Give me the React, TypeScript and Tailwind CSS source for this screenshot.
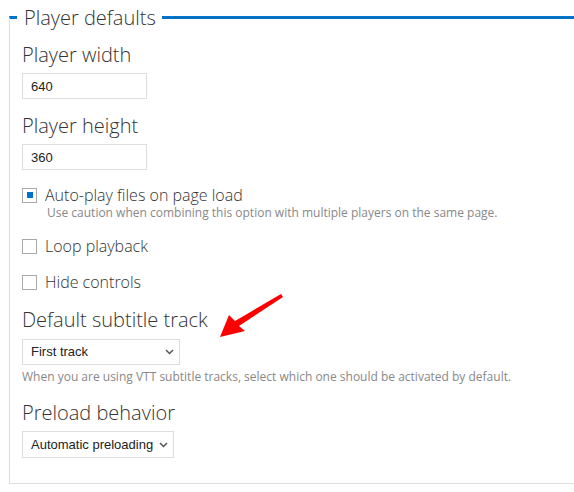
import { useState } from "react";

const heading = "font-['Open_Sans',sans-serif] font-light text-[20px] leading-[28px] text-[#333]";
const helper = "font-['Open_Sans',sans-serif] text-[12px] leading-[16px] text-[#888]";

function Chevron() {
  return (
    <svg width="9" height="6" viewBox="0 0 9 6" className="pointer-events-none absolute right-[6px] top-[11px]">
      <polyline points="1,1 4.5,4.5 8,1" fill="none" stroke="#555" strokeWidth="1.5" />
    </svg>
  );
}

function Check({ label, checked }: { label: string; checked?: boolean }) {
  return (
    <div className="flex items-center gap-[8px]">
      <span className="flex h-[15px] w-[15px] items-center justify-center border border-[#aaa] bg-white">
        {checked && <span className="h-[6px] w-[6px] bg-[#0073c6]" />}
      </span>
      <span className="font-['Open_Sans',sans-serif] text-[16px] font-light leading-[24px] text-[#333]">{label}</span>
    </div>
  );
}

export default function App() {
  const [width, setWidth] = useState("640");
  const [height, setHeight] = useState("360");

  return (
    <div className="relative h-[492px] w-[574px] overflow-hidden bg-white">
      <fieldset className="ml-[9px] border-b border-l border-r-0 border-[#ddd] border-t-[3px] border-t-[#0073c6] p-0 pb-[25px]">
        <legend className="ml-[7px] pl-[7px] pr-[6px] font-['Open_Sans',sans-serif] text-[20px] font-light leading-[35px] text-[#333]">
          Player defaults
        </legend>

        <div className="flex flex-col items-start pl-[12px]">
          <h3 className={`${heading} mt-[6px]`}>Player width</h3>
          <input
            value={width}
            onChange={(e) => setWidth(e.target.value)}
            className="mt-[4px] h-[26px] w-[125px] border border-[#ddd] px-[8px] font-['Liberation_Sans',sans-serif] text-[13px] text-[#222] outline-none"
          />

          <h3 className={`${heading} mt-[13px]`}>Player height</h3>
          <input
            value={height}
            onChange={(e) => setHeight(e.target.value)}
            className="mt-[4px] h-[26px] w-[125px] border border-[#ddd] px-[8px] font-['Liberation_Sans',sans-serif] text-[13px] text-[#222] outline-none"
          />

          <div className="mt-[13px]">
            <Check label="Auto-play files on page load" checked />
            <p className={`${helper} -mt-[2px] pl-[25px]`}>
              Use caution when combining this option with multiple players on the same page.
            </p>
          </div>
          <div className="mt-[13px]">
            <Check label="Loop playback" />
          </div>
          <div className="mt-[12px]">
            <Check label="Hide controls" />
          </div>

          <h3 className={`${heading} mt-[12px]`}>Default subtitle track</h3>
          <div className="relative mt-[4px]">
            <select className="h-[26px] w-[158px] appearance-none border border-[#ddd] bg-white pl-[8px] font-['Liberation_Sans',sans-serif] text-[13px] text-[#222] outline-none">
              <option>First track</option>
              <option>None</option>
            </select>
            <Chevron />
          </div>
          <p className={`${helper} mt-[4px]`}>
            When you are using VTT subtitle tracks, select which one should be activated by default.
          </p>

          <h3 className={`${heading} mt-[14px]`}>Preload behavior</h3>
          <div className="relative mt-[4px]">
            <select className="h-[27px] w-[152px] appearance-none border border-[#ddd] bg-white pl-[8px] font-['Liberation_Sans',sans-serif] text-[13px] text-[#222] outline-none">
              <option>Automatic preloading</option>
              <option>Metadata only</option>
              <option>None</option>
            </select>
            <Chevron />
          </div>
        </div>
      </fieldset>

      {/* annotation arrow */}
      <svg width="574" height="492" className="pointer-events-none absolute left-0 top-0">
        <polygon
          points="220,337 229,315 235,321 281,294 283,297 239,326 245,331"
          fill="#ff0000"
        />
      </svg>
    </div>
  );
}
